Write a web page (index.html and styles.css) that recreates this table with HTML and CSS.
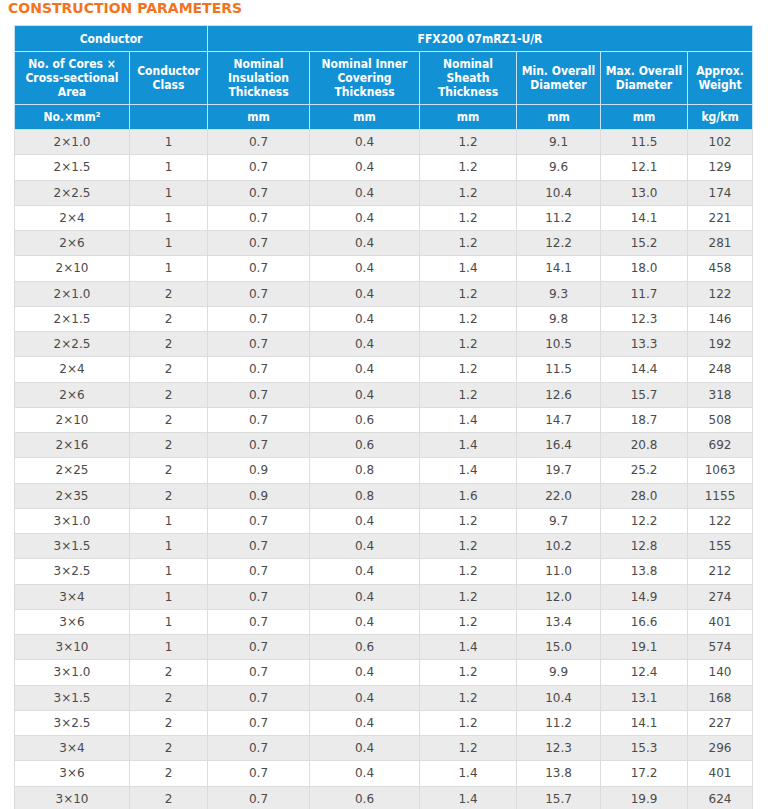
FILE: index.html
```html
<!DOCTYPE html>
<html lang="en">
<head>
<meta charset="utf-8">
<title>Construction Parameters</title>
<link rel="stylesheet" href="styles.css">
</head>
<body>
<div class="page">
  <h2 class="title">CONSTRUCTION PARAMETERS</h2>
  <table class="params">
    <colgroup>
      <col class="c1"><col class="c2"><col class="c3"><col class="c4"><col class="c5"><col class="c6"><col class="c7"><col class="c8">
    </colgroup>
    <thead>
      <tr class="h1">
        <th colspan="2">Conductor</th>
        <th colspan="6">FFX200 07mRZ1-U/R</th>
      </tr>
      <tr class="h2">
        <th>No. of Cores ×<br>Cross-sectional<br>Area</th>
        <th>Conductor<br>Class</th>
        <th>Nominal<br>Insulation<br>Thickness</th>
        <th>Nominal Inner<br>Covering<br>Thickness</th>
        <th>Nominal<br>Sheath<br>Thickness</th>
        <th>Min. Overall<br>Diameter</th>
        <th>Max. Overall<br>Diameter</th>
        <th>Approx.<br>Weight</th>
      </tr>
      <tr class="h3">
        <th>No.×mm²</th>
        <th></th>
        <th>mm</th>
        <th>mm</th>
        <th>mm</th>
        <th>mm</th>
        <th>mm</th>
        <th>kg/km</th>
      </tr>
    </thead>
    <tbody>
      <tr><td>2×1.0</td><td>1</td><td>0.7</td><td>0.4</td><td>1.2</td><td>9.1</td><td>11.5</td><td>102</td></tr>
      <tr><td>2×1.5</td><td>1</td><td>0.7</td><td>0.4</td><td>1.2</td><td>9.6</td><td>12.1</td><td>129</td></tr>
      <tr><td>2×2.5</td><td>1</td><td>0.7</td><td>0.4</td><td>1.2</td><td>10.4</td><td>13.0</td><td>174</td></tr>
      <tr><td>2×4</td><td>1</td><td>0.7</td><td>0.4</td><td>1.2</td><td>11.2</td><td>14.1</td><td>221</td></tr>
      <tr><td>2×6</td><td>1</td><td>0.7</td><td>0.4</td><td>1.2</td><td>12.2</td><td>15.2</td><td>281</td></tr>
      <tr><td>2×10</td><td>1</td><td>0.7</td><td>0.4</td><td>1.4</td><td>14.1</td><td>18.0</td><td>458</td></tr>
      <tr><td>2×1.0</td><td>2</td><td>0.7</td><td>0.4</td><td>1.2</td><td>9.3</td><td>11.7</td><td>122</td></tr>
      <tr><td>2×1.5</td><td>2</td><td>0.7</td><td>0.4</td><td>1.2</td><td>9.8</td><td>12.3</td><td>146</td></tr>
      <tr><td>2×2.5</td><td>2</td><td>0.7</td><td>0.4</td><td>1.2</td><td>10.5</td><td>13.3</td><td>192</td></tr>
      <tr><td>2×4</td><td>2</td><td>0.7</td><td>0.4</td><td>1.2</td><td>11.5</td><td>14.4</td><td>248</td></tr>
      <tr><td>2×6</td><td>2</td><td>0.7</td><td>0.4</td><td>1.2</td><td>12.6</td><td>15.7</td><td>318</td></tr>
      <tr><td>2×10</td><td>2</td><td>0.7</td><td>0.6</td><td>1.4</td><td>14.7</td><td>18.7</td><td>508</td></tr>
      <tr><td>2×16</td><td>2</td><td>0.7</td><td>0.6</td><td>1.4</td><td>16.4</td><td>20.8</td><td>692</td></tr>
      <tr><td>2×25</td><td>2</td><td>0.9</td><td>0.8</td><td>1.4</td><td>19.7</td><td>25.2</td><td>1063</td></tr>
      <tr><td>2×35</td><td>2</td><td>0.9</td><td>0.8</td><td>1.6</td><td>22.0</td><td>28.0</td><td>1155</td></tr>
      <tr><td>3×1.0</td><td>1</td><td>0.7</td><td>0.4</td><td>1.2</td><td>9.7</td><td>12.2</td><td>122</td></tr>
      <tr><td>3×1.5</td><td>1</td><td>0.7</td><td>0.4</td><td>1.2</td><td>10.2</td><td>12.8</td><td>155</td></tr>
      <tr><td>3×2.5</td><td>1</td><td>0.7</td><td>0.4</td><td>1.2</td><td>11.0</td><td>13.8</td><td>212</td></tr>
      <tr><td>3×4</td><td>1</td><td>0.7</td><td>0.4</td><td>1.2</td><td>12.0</td><td>14.9</td><td>274</td></tr>
      <tr><td>3×6</td><td>1</td><td>0.7</td><td>0.4</td><td>1.2</td><td>13.4</td><td>16.6</td><td>401</td></tr>
      <tr><td>3×10</td><td>1</td><td>0.7</td><td>0.6</td><td>1.4</td><td>15.0</td><td>19.1</td><td>574</td></tr>
      <tr><td>3×1.0</td><td>2</td><td>0.7</td><td>0.4</td><td>1.2</td><td>9.9</td><td>12.4</td><td>140</td></tr>
      <tr><td>3×1.5</td><td>2</td><td>0.7</td><td>0.4</td><td>1.2</td><td>10.4</td><td>13.1</td><td>168</td></tr>
      <tr><td>3×2.5</td><td>2</td><td>0.7</td><td>0.4</td><td>1.2</td><td>11.2</td><td>14.1</td><td>227</td></tr>
      <tr><td>3×4</td><td>2</td><td>0.7</td><td>0.4</td><td>1.2</td><td>12.3</td><td>15.3</td><td>296</td></tr>
      <tr><td>3×6</td><td>2</td><td>0.7</td><td>0.4</td><td>1.4</td><td>13.8</td><td>17.2</td><td>401</td></tr>
      <tr><td>3×10</td><td>2</td><td>0.7</td><td>0.6</td><td>1.4</td><td>15.7</td><td>19.9</td><td>624</td></tr>
    </tbody>
  </table>
</div>
</body>
</html>
```

FILE: styles.css
```css
* { box-sizing: border-box; }
html, body { margin: 0; padding: 0; background: #fff; }
body {
  font-family: "DejaVu Sans", Verdana, sans-serif;
  font-size: 12px;
  color: #4a4a4a;
}
.page {
  padding: 0 0 0 8px;
}
.title {
  margin: 0;
  height: 25px;
  line-height: 17px;
  font-family: "DejaVu Sans", Verdana, sans-serif;
  font-size: 14px;
  font-weight: bold;
  color: #f47321;
}
.params {
  margin-left: 6px;
  width: 738px;
  border-collapse: collapse;
  table-layout: fixed;
}
.c1 { width: 115px; }
.c2 { width: 78px; }
.c3 { width: 102px; }
.c4 { width: 110px; }
.c5 { width: 97px; }
.c6 { width: 84px; }
.c7 { width: 87px; }
.c8 { width: 65px; }
.params th {
  background: #1391d5;
  color: #fff;
  font-family: "DejaVu Sans Condensed", "DejaVu Sans", sans-serif;
  font-weight: bold;
  font-size: 12px;
  text-align: center;
  border: 1px solid #c9e2f2;
  padding: 0 1px;
  line-height: 14px;
  white-space: nowrap;
}
.params .h1 th { height: 26px; }
.params .h2 th { height: 53px; }
.params .h3 th { height: 25px; }
.params td {
  text-align: center;
  border: 1px solid #dcdcdc;
  height: 25.25px;
  padding: 0;
  line-height: 14px;
}
.params tbody tr:nth-child(odd) td { background: #ebebeb; }
.params tbody tr:nth-child(even) td { background: #fff; }
```
